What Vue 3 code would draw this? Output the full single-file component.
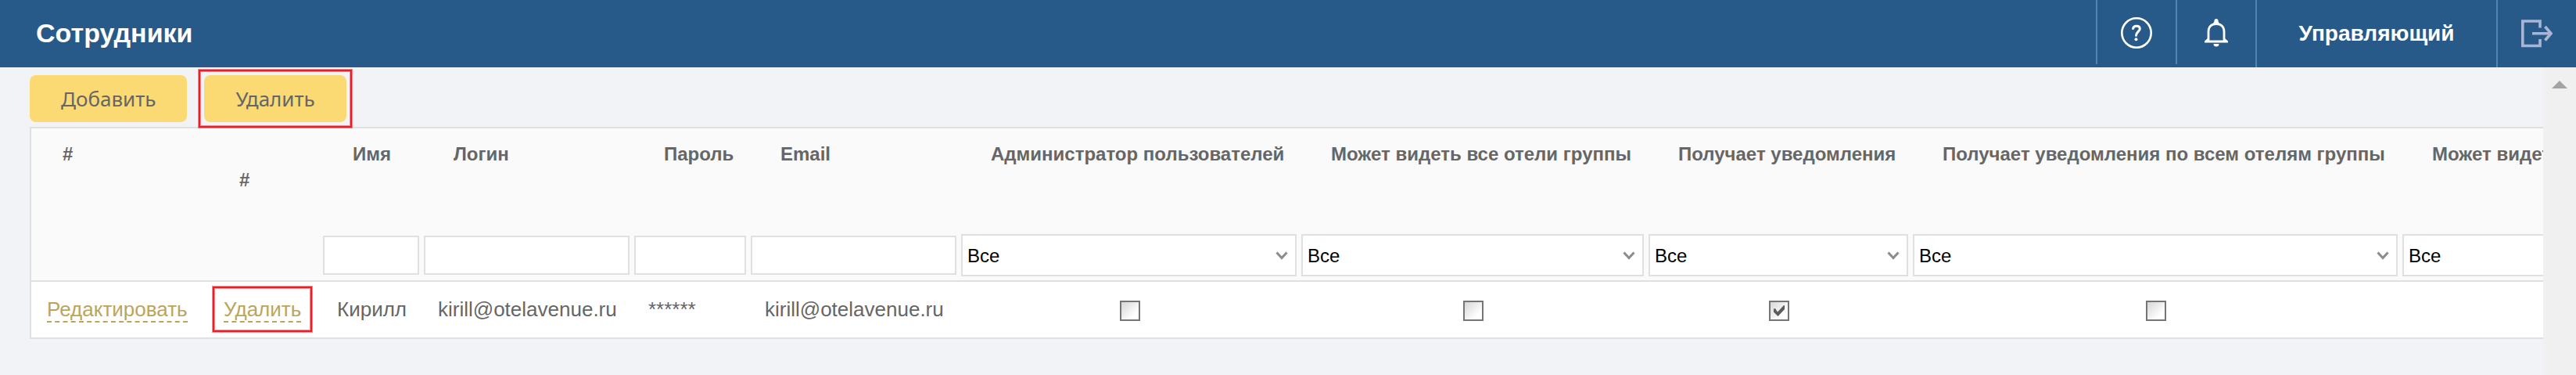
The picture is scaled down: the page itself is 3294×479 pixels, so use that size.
<script setup>
import { ref } from 'vue'

const columns = [
  { key: 'name', title: 'Имя', filter: 'text' },
  { key: 'login', title: 'Логин', filter: 'text' },
  { key: 'password', title: 'Пароль', filter: 'text' },
  { key: 'email', title: 'Email', filter: 'text' },
  { key: 'admin', title: 'Администратор пользователей', filter: 'select' },
  { key: 'group', title: 'Может видеть все отели группы', filter: 'select' },
  { key: 'notify', title: 'Получает уведомления', filter: 'select' },
  { key: 'notifyAll', title: 'Получает уведомления по всем отелям группы', filter: 'select' },
  { key: 'view', title: 'Может видеть', filter: 'select' }
]

const rows = ref([
  {
    name: 'Кирилл',
    login: 'kirill@otelavenue.ru',
    password: '******',
    email: 'kirill@otelavenue.ru',
    admin: false,
    group: false,
    notify: true,
    notifyAll: false,
    view: false
  }
])
</script>

<template>
  <div class="page">
    <header class="topbar">
      <h1 class="title">Сотрудники</h1>
      <nav class="tools">
        <button class="tool short" type="button" aria-label="Справка">
          <svg width="40" height="40" viewBox="0 0 40 40" fill="none" stroke="#fff">
            <circle cx="20" cy="20" r="18.7" stroke-width="2.6" />
            <path d="M15.6 14.6C15.9 12.4 17.4 11.3 20 11.3C22.6 11.3 24.3 12.7 24.3 14.8C24.3 18.3 19.5 18.5 19.5 23.2" stroke-width="3" stroke-linecap="round" />
            <circle cx="19.5" cy="28.3" r="2" fill="#fff" stroke="none" />
          </svg>
        </button>
        <button class="tool short" type="button" aria-label="Уведомления">
          <svg width="30" height="36" viewBox="0 0 30 36" fill="none" stroke="#fff">
            <path d="M5 29V16.5C5 10 9 6.5 15 6.5C21 6.5 25 10 25 16.5V29" stroke-width="2.8" />
            <path d="M4 25L0 28.5V30.5H30V28.5L26 25V27.5H4Z" fill="#fff" stroke="none" />
            <path d="M11 6.5C11.5 4.5 12.5 4 12.5 2.5A2.5 2.5 0 0 1 17.5 2.5C17.5 4 18.5 4.5 19 6.5ZM18.5 32H11.5A3.5 3.5 0 0 0 18.5 32Z" fill="#fff" stroke="none" />
          </svg>
        </button>
        <a class="user" href="#">Управляющий</a>
        <button class="tool exit" type="button" aria-label="Выход">
          <svg width="40" height="36" viewBox="0 0 40 36" fill="none" stroke="#a9b5d6" stroke-width="3.6">
            <path d="M24 10.5V2H1.8V33.5H24V25" />
            <path d="M14 17.7H38M30.5 9L38 17.7L30.5 26.5" />
          </svg>
        </button>
      </nav>
    </header>

    <div class="body">
      <main class="content">
        <div class="actions">
          <button class="btn" type="button">Добавить</button>
          <span class="marked"><button class="btn" type="button">Удалить</button></span>
        </div>

        <table class="grid">
          <colgroup>
            <col class="c-edit" />
            <col class="c-del" />
            <col v-for="c in columns" :key="c.key" :class="'c-' + c.key" />
          </colgroup>
          <thead>
            <tr class="heads">
              <th scope="col">#</th>
              <th scope="col" class="lower">#</th>
              <th v-for="c in columns" :key="c.key" scope="col">{{ c.title }}</th>
            </tr>
            <tr class="filters">
              <td></td>
              <td></td>
              <td v-for="c in columns" :key="c.key">
                <input v-if="c.filter === 'text'" type="text" class="field" :aria-label="c.title" />
                <span v-else class="drop">
                  <select class="select" :aria-label="c.title">
                    <option>Все</option>
                    <option>Да</option>
                    <option>Нет</option>
                  </select>
                  <svg class="chevron" width="16" height="12" viewBox="0 0 16 12" fill="none" stroke="#8c8c8c" stroke-width="3">
                    <path d="M1.5 1.5L8 8.5L14.5 1.5" />
                  </svg>
                </span>
              </td>
            </tr>
          </thead>
          <tbody>
            <tr v-for="row in rows" :key="row.login">
              <td><a class="link" href="#">Редактировать</a></td>
              <td><span class="marked"><a class="link" href="#">Удалить</a></span></td>
              <td v-for="c in columns" :key="c.key" :class="{ center: c.filter === 'select' }">
                <template v-if="c.filter === 'text'">{{ row[c.key] }}</template>
                <label v-else class="check">
                  <input v-model="row[c.key]" type="checkbox" :aria-label="c.title" />
                  <svg v-if="row[c.key]" class="tick" width="16" height="16" viewBox="0 0 16 16">
                    <path d="M1 5.5L3 5L6 9.5L14 1H15V6L6.5 15L1 9.5Z" fill="#5c5c5c" />
                  </svg>
                </label>
              </td>
            </tr>
          </tbody>
        </table>
      </main>
      <div class="scrollbar">
        <svg width="20" height="10" viewBox="0 0 20 10"><path d="M10 0L20 10H0Z" fill="#a3a3a3" /></svg>
      </div>
    </div>
  </div>
</template>

<style>
body {
  background: #f1f3f7;
}
</style>

<style scoped>
.page {
  display: flex;
  flex-direction: column;
  min-height: 100vh;
  overflow: hidden;
  background: #f1f3f7;
  color: #666;
  font-family: "Liberation Sans", Arial, sans-serif;
}
button,
input,
select {
  box-sizing: border-box;
  margin: 0;
  font-family: inherit;
}
.topbar {
  display: flex;
  justify-content: space-between;
  align-items: center;
  height: 86px;
  padding-left: 46px;
  background: #275a88;
  color: #fff;
}
.title {
  margin: 0;
  padding-bottom: 2px;
  font-size: 34px;
  line-height: 40px;
}
.tools {
  display: flex;
  align-items: flex-start;
  align-self: stretch;
}
.tool,
.user {
  display: flex;
  align-items: center;
  justify-content: center;
  box-sizing: border-box;
  height: 86px;
  padding: 0;
  border: 0;
  border-left: 2px solid #4f84b8;
  background: none;
}
.tool {
  width: 102px;
}
.tool.short {
  height: 82px;
  padding-top: 2px;
}
.user {
  width: 308px;
  color: #fff;
  font-size: 28px;
  font-weight: bold;
  text-decoration: none;
}
.body {
  display: flex;
  flex: 1;
}
.content {
  flex: 1;
  min-width: 0;
  overflow: hidden;
  padding: 10px 0 46px 38px;
}
.actions {
  display: flex;
  gap: 22px;
  margin-bottom: 6px;
}
.btn {
  display: block;
  height: 60px;
  padding: 0 40px;
  border: 0;
  border-radius: 8px;
  background: #fbda73;
  color: #666;
  font-family: "Noto Sans", sans-serif;
  font-size: 26px;
}
.marked {
  position: relative;
}
.marked::after {
  content: "";
  position: absolute;
  inset: -7px;
  border: 2px solid #ee1c25;
  box-shadow: 0 0 0 1px rgba(238, 28, 37, 0.5), inset 0 0 0 1px rgba(238, 28, 37, 0.5);
  pointer-events: none;
}
td .marked::after {
  inset: -14px;
}
.grid {
  width: 3600px;
  border: 2px solid #dfe0e0;
  border-spacing: 0;
  table-layout: fixed;
  background: #fff;
}
.c-edit { width: 226px; }
.c-del { width: 145px; }
.c-name { width: 129px; }
.c-login,
.c-email { width: 269px; }
.c-password { width: 149px; }
.c-admin { width: 435px; }
.c-group { width: 444px; }
.c-notify { width: 338px; }
.c-notifyAll { width: 626px; }
thead {
  background: #fafafa;
}
th {
  height: 130px;
  box-sizing: border-box;
  padding: 19px 0 0 40px;
  font-size: 24px;
  line-height: 28px;
  text-align: left;
  vertical-align: top;
  white-space: nowrap;
}
th.lower {
  padding-top: 52px;
}
.filters td {
  box-sizing: border-box;
  height: 66px;
  padding: 0 4px 0 2px;
  border-bottom: 2px solid #dfe0e0;
}
.field,
.select {
  display: block;
  width: 100%;
  border: 2px solid #dfe0e0;
  border-radius: 0;
  background: #fff;
  color: #000;
  font-size: 24px;
}
.field {
  height: 50px;
  padding: 0 8px;
}
.select {
  height: 54px;
  padding: 0 6px;
  appearance: none;
}
.drop {
  display: block;
  position: relative;
}
.chevron {
  position: absolute;
  top: 22px;
  right: 11px;
  pointer-events: none;
}
tbody td {
  height: 71px;
  box-sizing: border-box;
  padding: 0 20px 2px;
  font-size: 26px;
  line-height: 30px;
  white-space: nowrap;
}
tbody td.center {
  text-align: center;
}
.link {
  color: #bba55c;
  text-decoration: none;
  border-bottom: 2px dashed #bba55c;
}
.check {
  display: inline-block;
  position: relative;
  vertical-align: middle;
}
.check input {
  display: block;
  width: 26px;
  height: 26px;
  border: 2px solid #757575;
  background: linear-gradient(135deg, #d6d6d6, #fff 75%);
  appearance: none;
}
.tick {
  position: absolute;
  top: 5px;
  left: 5px;
}
.scrollbar {
  display: flex;
  justify-content: center;
  width: 42px;
  padding-top: 17px;
  box-sizing: border-box;
  background: #f0f0f0;
}
</style>
